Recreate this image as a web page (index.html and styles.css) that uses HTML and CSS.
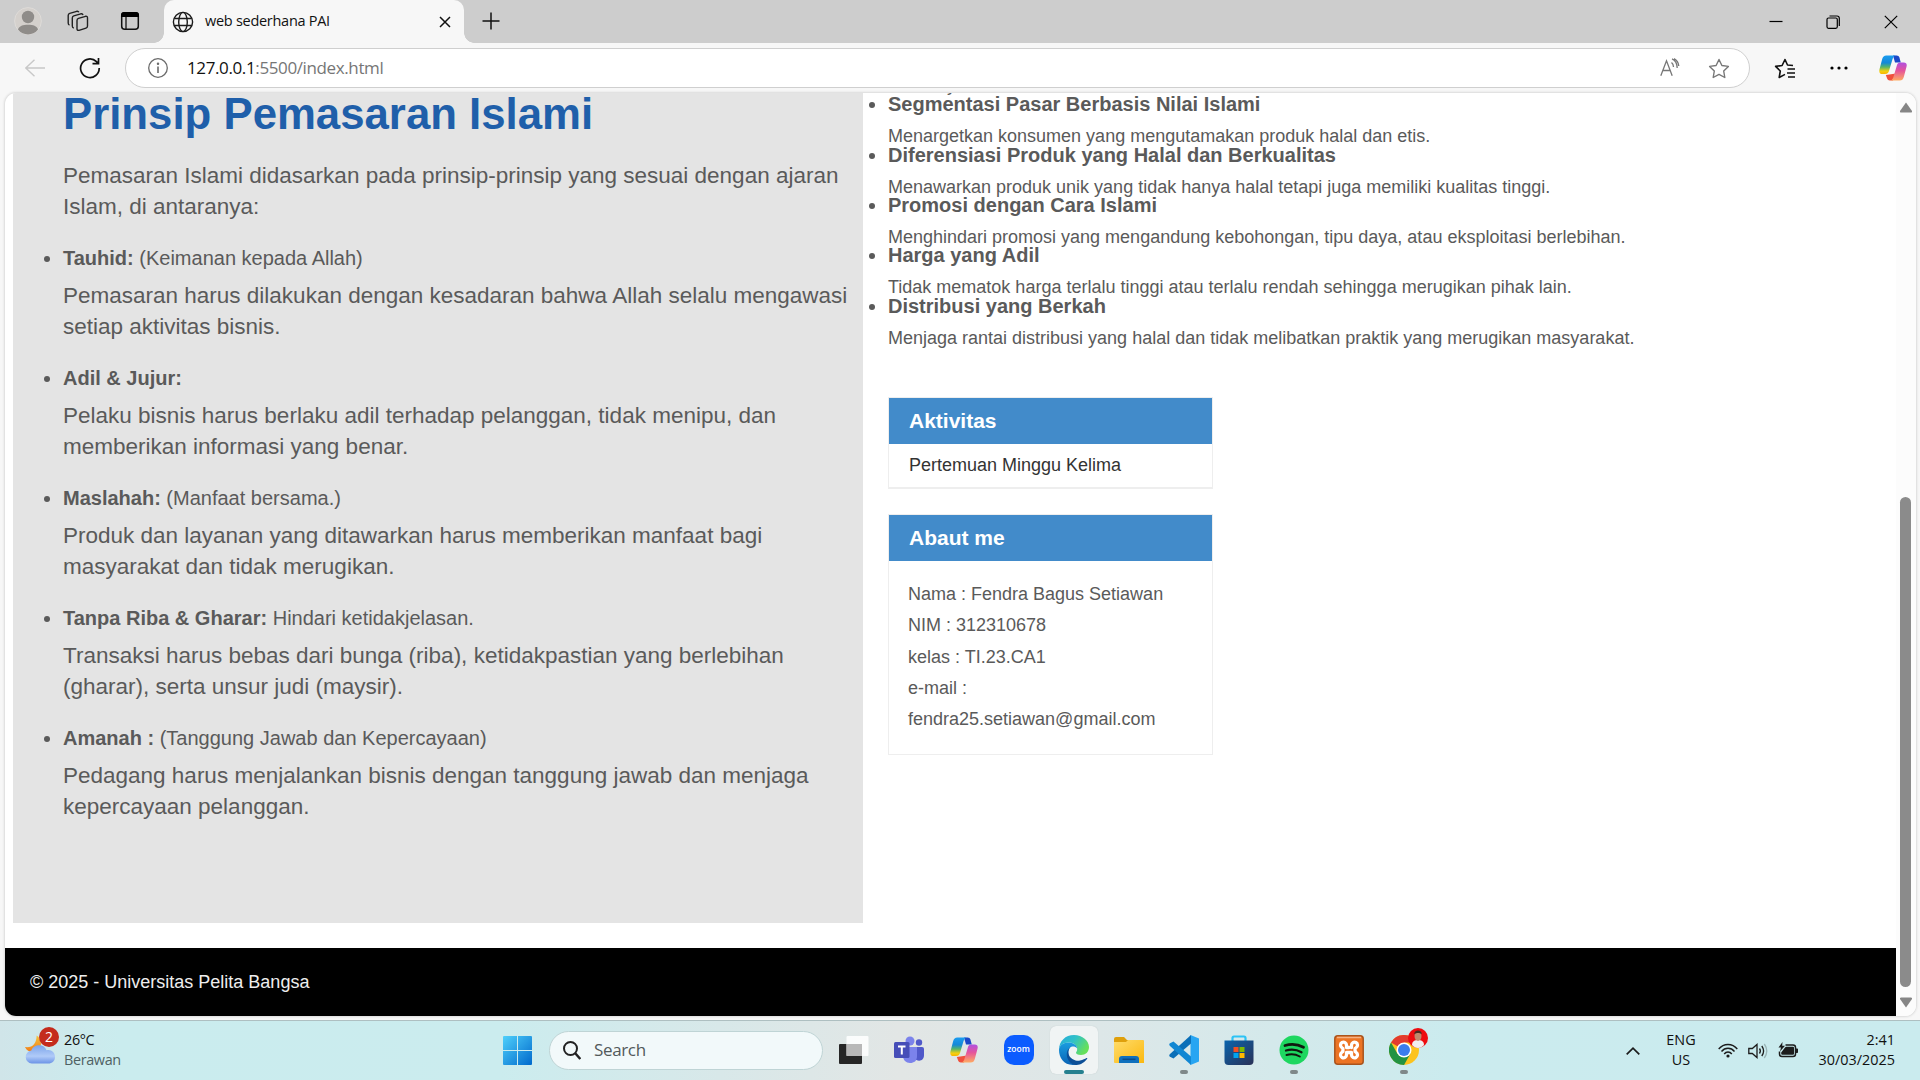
FILE: index.html
```html
<!DOCTYPE html>
<html lang="id">
<head>
<meta charset="utf-8">
<title>web sederhana PAI</title>
<link rel="stylesheet" href="styles.css">
</head>
<body>
<svg width="0" height="0" class="defs">
  <defs>
    <linearGradient id="cpA" x1="0" y1="0" x2="0" y2="1"><stop offset="0" stop-color="#1b9df0"/><stop offset=".4" stop-color="#1488d8"/><stop offset=".62" stop-color="#55b46a"/><stop offset=".85" stop-color="#f5d010"/><stop offset="1" stop-color="#f7b500"/></linearGradient>
    <linearGradient id="cpB" x1="0" y1="0" x2="0" y2="1"><stop offset="0" stop-color="#b04fe0"/><stop offset=".45" stop-color="#e5549b"/><stop offset="1" stop-color="#ffac62"/></linearGradient>
    <linearGradient id="win" x1="0" y1="0" x2="1" y2="1"><stop offset="0" stop-color="#4fd0fb"/><stop offset="1" stop-color="#0069cc"/></linearGradient>
    <linearGradient id="edA" x1="0" y1="0" x2="1" y2=".5"><stop offset="0" stop-color="#25a9dd"/><stop offset=".5" stop-color="#2fc1c8"/><stop offset="1" stop-color="#66e05a"/></linearGradient>
    <linearGradient id="edB" x1="0" y1="0" x2="0" y2="1"><stop offset="0" stop-color="#1a9de0"/><stop offset="1" stop-color="#0a63b5"/></linearGradient>
    <linearGradient id="fold" x1="0" y1="0" x2="1" y2="1"><stop offset="0" stop-color="#ffdc6b"/><stop offset="1" stop-color="#fbb80f"/></linearGradient>
    <linearGradient id="store" x1="0" y1="0" x2="1" y2="1"><stop offset="0" stop-color="#0a64ad"/><stop offset="1" stop-color="#2a3156"/></linearGradient>
    <linearGradient id="cloud" x1="0" y1="0" x2="0" y2="1"><stop offset="0" stop-color="#7ba3ea"/><stop offset=".6" stop-color="#b0cbf8"/><stop offset="1" stop-color="#6b93e6"/></linearGradient>
    <linearGradient id="moon" x1="0" y1="0" x2="0" y2="1"><stop offset="0" stop-color="#f6c43c"/><stop offset="1" stop-color="#f07d18"/></linearGradient>
    <symbol id="copilot" viewBox="0 0 28 26">
      <path d="M14 0.4h3.6c1.6 0 2.3.8 2.8 2.2l1.4 5H16z" fill="#1b48c8"/>
      <path d="M6.800 20l1.300 3.600c.5 1.300 1.300 2 2.700 2h3.200l3-7z" fill="#f0503c"/>
      <path d="M7.300.4h9.200c-1.800.6-2.500 2-3.100 4.100L10.300 15c-.7 2.600-1.500 4-4.300 4H3.300C.7 19-.2 17 .5 14.200L3.200 4C3.900 1.600 5 .4 7.300.4z" fill="url(#cpA)"/>
      <path d="M20.700 25.600H11.500c1.800-.6 2.500-2 3.100-4.100L17.700 11c.7-2.600 1.500-3.500 4.300-3.500h2.700c2.600 0 3.500 1.500 2.800 4.300L24.800 22c-.7 2.400-1.800 3.600-4.100 3.600z" fill="url(#cpB)"/>
    </symbol>
  </defs>
</svg>

<header class="tabbar">
  <div class="tab-tools">
    <svg class="avatar" viewBox="0 0 28 28"><circle cx="14" cy="14" r="13.400" fill="#d4d0cc" stroke="#dedbd8"/><circle cx="14" cy="10" r="6.200" fill="#8f8c89"/><path d="M4 22.500c1-3.700 5-4.800 10-4.800s9 1.100 10 4.800c-5 6.500-15 6.500-20 0z" fill="#8f8c89"/></svg>
    <svg class="workspaces" viewBox="0 0 22 22" fill="none" stroke="#222" stroke-width="1.400" stroke-linejoin="round"><path d="M11.500 8.300 18.500 6.300q2-.4 2 1.600v8q0 1.700-1.500 2.200l-7 2.200q-2 .5-2-1.500v-8.300q0-1.700 1.500-2.200zM6.800 18q-1.500-.3-1.500-2V8q0-1.700 1.500-2.200l7-2q1.800-.4 2.200 1.200M2.500 15q-1.300-.3-1.300-2V5.500q0-1.700 1.500-2.200l7-2q1.600-.4 2.100 1"/></svg>
    <svg class="tabs-icon" viewBox="0 0 20 20"><rect x="1.700" y="1.700" width="16.600" height="16.600" rx="3" fill="none" stroke="#111" stroke-width="1.500"/><path d="M1 6V4q0-3 3-3h12q3 0 3 3v2z"/><path d="M6 6v12" stroke="#111" stroke-width="1.300"/></svg>
  </div>
  <div class="tab">
    <svg class="globe" viewBox="0 0 22 22" fill="none" stroke="#1b1b1b" stroke-width="1.400"><circle cx="11" cy="11" r="9.600"/><ellipse cx="11" cy="11" rx="4.300" ry="9.600"/><path d="M2.200 7.500h17.600M2.200 14.500h17.600"/></svg>
    <span class="tab-title">web sederhana PAI</span>
    <svg class="tab-close" viewBox="0 0 12 12" stroke="#111" stroke-width="1.500"><path d="m1 1 10 10M11 1 1 11"/></svg>
  </div>
  <svg class="plus" viewBox="0 0 18 18" stroke="#111" stroke-width="1.500"><path d="M9 0.500v17M0.500 9h17"/></svg>
  <div class="window-buttons">
    <svg class="minimize" viewBox="0 0 14 14" stroke="#000" stroke-width="1.200"><path d="M.5 7.500h13"/></svg>
    <svg viewBox="0 0 14 14" fill="none" stroke="#000" stroke-width="1.200"><rect x="1" y="3" width="10.300" height="10.300" rx="1.500"/><path d="M3.500 1H11q2.300 0 2.300 2.300V11"/></svg>
    <svg viewBox="0 0 14 14" stroke="#000" stroke-width="1.200"><path d="m.8.8 12.400 12.400M13.200.8.8 13.200"/></svg>
  </div>
</header>

<nav class="toolbar">
  <svg class="back" viewBox="0 0 20 18" fill="none" stroke="#c8c8c8" stroke-width="1.400"><path d="M20 9H1M9.500.8.8 9l8.700 8.200"/></svg>
  <svg class="reload" viewBox="0 0 22 22" fill="none" stroke="#111" stroke-width="1.700"><path d="M20.200 11A9.300 9.300 0 1 1 17.500 4.700l1.600 1.800M19.500 1v5.700h-6"/></svg>
  <div class="address">
    <svg class="info" viewBox="0 0 22 22" fill="none" stroke="#6b6b6b" stroke-width="1.300"><circle cx="11" cy="11" r="9.300"/><path d="M11 9.500V16" stroke-width="1.600"/><circle cx="11" cy="6.700" r=".6" fill="#6b6b6b"/></svg>
    <span class="url"><b>127.0.0.1</b>:5500/index.html</span>
    <svg class="read" viewBox="0 0 20 19" fill="none" stroke="#777" stroke-width="1.300"><path d="m.8 17.800 5.700-15 5.700 15M3 12.500h7M11.500 4.500c1.300 1 2 2.500 2 4.500M12 .8c3 1.200 5 4.500 5.200 9.200M14 .6c3 1.600 4.500 4 4.800 7.400"/></svg>
    <svg class="star" viewBox="0 0 22 21" fill="none" stroke="#777" stroke-width="1.400" stroke-linejoin="round"><path d="m11 1.500 2.900 6 6.500.9-4.700 4.600 1.100 6.500-5.800-3.100-5.800 3.100L6.300 13 1.600 8.400l6.500-.9z"/></svg>
  </div>
  <svg class="favs" viewBox="0 0 22 21" fill="none" stroke="#111" stroke-width="1.600" stroke-linejoin="round"><path d="M19 7.500 13.500 7 11 1.500 8.100 7.500l-6.500.9L6.300 13l-1.100 6.500 5.800-3.100M13.500 11H21M13 15h8M14 19h7"/></svg>
  <svg class="more" viewBox="0 0 18 4"><circle cx="2" cy="2" r="1.600"/><circle cx="9" cy="2" r="1.600"/><circle cx="16" cy="2" r="1.600"/></svg>
  <svg class="side-copilot"><use href="#copilot"/></svg>
</nav>

<main class="viewport">
  <div class="page">
    <div class="columns">
      <section class="principles">
        <h1>Prinsip Pemasaran Islami</h1>
        <p>Pemasaran Islami didasarkan pada prinsip-prinsip yang sesuai dengan ajaran<br>Islam, di antaranya:</p>
        <ul>
          <li><b>Tauhid:</b> (Keimanan kepada Allah)<p>Pemasaran harus dilakukan dengan kesadaran bahwa Allah selalu mengawasi<br>setiap aktivitas bisnis.</p></li>
          <li><b>Adil &amp; Jujur:</b><p>Pelaku bisnis harus berlaku adil terhadap pelanggan, tidak menipu, dan<br>memberikan informasi yang benar.</p></li>
          <li><b>Maslahah:</b> (Manfaat bersama.)<p>Produk dan layanan yang ditawarkan harus memberikan manfaat bagi<br>masyarakat dan tidak merugikan.</p></li>
          <li><b>Tanpa Riba &amp; Gharar:</b> Hindari ketidakjelasan.<p>Transaksi harus bebas dari bunga (riba), ketidakpastian yang berlebihan<br>(gharar), serta unsur judi (maysir).</p></li>
          <li><b>Amanah :</b> (Tanggung Jawab dan Kepercayaan)<p>Pedagang harus menjalankan bisnis dengan tanggung jawab dan menjaga<br>kepercayaan pelanggan.</p></li>
        </ul>
      </section>
      <section class="side">
        <div class="strategy">
          <p class="scrolled">y</p>
          <ul>
            <li><b>Segmentasi Pasar Berbasis Nilai Islami</b><p>Menargetkan konsumen yang mengutamakan produk halal dan etis.</p></li>
            <li><b>Diferensiasi Produk yang Halal dan Berkualitas</b><p>Menawarkan produk unik yang tidak hanya halal tetapi juga memiliki kualitas tinggi.</p></li>
            <li><b>Promosi dengan Cara Islami</b><p>Menghindari promosi yang mengandung kebohongan, tipu daya, atau eksploitasi berlebihan.</p></li>
            <li><b>Harga yang Adil</b><p>Tidak mematok harga terlalu tinggi atau terlalu rendah sehingga merugikan pihak lain.</p></li>
            <li><b>Distribusi yang Berkah</b><p>Menjaga rantai distribusi yang halal dan tidak melibatkan praktik yang merugikan masyarakat.</p></li>
          </ul>
        </div>
        <div class="widget">
          <h3>Aktivitas</h3>
          <div class="widget-link">Pertemuan Minggu Kelima</div>
        </div>
        <div class="widget">
          <h3>Abaut me</h3>
          <p>Nama : Fendra Bagus Setiawan<br>NIM : 312310678<br>kelas : TI.23.CA1<br>e-mail :<br>fendra25.setiawan@gmail.com</p>
        </div>
      </section>
    </div>
    <footer>© 2025 - Universitas Pelita Bangsa</footer>
  </div>
  <div class="scrollbar">
    <svg viewBox="0 0 14 11"><path d="M7 .5 13 9q.5 1.500-1 1.500H2Q.5 10.500 1 9z" fill="#868686"/></svg>
    <div class="thumb"></div>
    <svg viewBox="0 0 14 11"><path d="M7 10.500 13 2q.5-1.500-1-1.500H2Q.5.5 1 2z" fill="#868686"/></svg>
  </div>
</main>

<div class="taskbar">
  <div class="weather">
    <div class="weather-icon">
      <svg viewBox="0 0 32 30"><path d="M12 0c5 3 7 12 0 16-4 2-10 1-12-4 8 1 12-4 12-12z" fill="url(#moon)"/><path d="M7 29a6.800 6.800 0 0 1-.5-13.500C8 11.500 11 10 14.500 10c4 0 6.500 2 7.800 5.200C27 14 31 17.500 31 22s-3 7-7 7z" fill="url(#cloud)"/></svg>
      <span class="badge">2</span>
    </div>
    <div class="weather-text"><span>26°C</span><span class="muted">Berawan</span></div>
  </div>
  <div class="apps">
    <svg class="start" viewBox="0 0 29 29" fill="url(#win)"><path d="M1 0h13v14H0V1q0-1 1-1zM15 0h13q1 0 1 1v13H15zM0 15h14v14H1q-1 0-1-1zM15 15h14v13q0 1-1 1H15z"/></svg>
    <div class="search">
      <svg viewBox="0 0 18 19" fill="none" stroke="#222" stroke-width="2"><circle cx="7.500" cy="7.500" r="6.500"/><path d="m12 12 5.300 6" stroke-width="2.500"/></svg>
      <span>Search</span>
    </div>
    <div class="app"><svg viewBox="0 0 30 30"><rect x="0" y="9" width="23" height="20" rx="1" fill="#262626"/><rect x="7.500" y="1" width="22" height="20" rx="1" fill="#fff" opacity=".85"/><rect x="7.500" y="9" width="15.500" height="12" fill="#b8b8b8"/></svg></div>
    <div class="app"><svg viewBox="0 0 30 30"><circle cx="16" cy="6" r="4.500" fill="#7b83eb"/><circle cx="25" cy="7.500" r="3.200" fill="#5059c9"/><path d="M20 12h8q2 0 2 2v6c0 7-7 7-10 3z" fill="#5059c9"/><path d="M9 12h14v9c0 5-3 7-7 7s-7-3-7-7z" fill="#7b83eb"/><rect x="0" y="7" width="15.500" height="16" rx="1.500" fill="#464eb8"/><path d="M4 11.500h7.500M7.800 11.500v8" stroke="#fff" stroke-width="2"/></svg></div>
    <div class="app"><svg class="cp"><use href="#copilot"/></svg></div>
    <div class="app"><div class="zoom">zoom</div></div>
    <div class="app active"><svg viewBox="0 0 30 30"><path d="M0 15C0 6 6.500 0 15 0s15 6 15 12c0 5-3.500 8-8 8-3.500 0-5-1.200-5-2.300 0-.8 1.200-1.200 1.200-3.700C18.200 10 14 7.500 10 7.500 4 7.500 0 11 0 15z" fill="url(#edA)"/><path d="M0 15c0-4.500 4-7.500 10-7.500 4 0 8 2.500 8.200 6-1-1.500-2.700-2-4.200-2-4 0-6 5-4 10 1.500 4 5 8 8 8-12 2.500-18-6-18-14.500z" fill="url(#edB)"/><path d="M11 12.500C6 20 14 27 21 25.500c3-.6 5-1.600 6.500-2.500 .6-.3 1 .2.700.7C24 29.500 19 30 16 29.900 8 28 5 17 11 12.500z" fill="#0c4f97"/></svg><i class="mark wide"></i></div>
    <div class="app"><svg viewBox="0 0 30 30"><path d="M0 4q0-2 2-2h8l3 3h15q2 0 2 2v5H0z" fill="#dfa00c"/><path d="M0 7h12l2-2h14.500q1.500 0 1.500 1.500V28H1q-1 0-1-1z" fill="url(#fold)"/><path d="M5 28v-4q0-3 3-3h14q3 0 3 3v4z" fill="#0f70bd"/><path d="M8.500 24.300h13" stroke="#084b8a" stroke-width="1.500"/></svg></div>
    <div class="app"><svg viewBox="0 0 30 30"><path d="M21.500 0 30 3.500v23L21.500 30z" fill="#27a5f2"/><path d="M22 0v8.500L4.500 23.500 1 21.800Q-.5 20.600 1 19z" fill="#0a6fb8"/><path d="M22 30v-8.500L4.500 6.500 1 8.200Q-.5 9.400 1 11z" fill="#1287d3"/></svg><i class="mark"></i></div>
    <div class="app"><svg viewBox="0 0 30 30"><path d="M8.500 7V3q0-1.500 1.500-1.500h10q1.500 0 1.500 1.500v4" fill="none" stroke="#2cc3f5" stroke-width="2.200"/><path d="M.5 5.500h29V26q0 4-4 4h-21q-4 0-4-4z" fill="url(#store)"/><path d="M9.500 12h5v5h-5z" fill="#f25022"/><path d="M15.500 12h5v5h-5z" fill="#7fba00"/><path d="M9.500 18h5v5h-5z" fill="#00a4ef"/><path d="M15.500 18h5v5h-5z" fill="#ffb900"/></svg></div>
    <div class="app"><svg viewBox="0 0 30 30"><circle cx="15" cy="15" r="14.500" fill="#1ed760"/><g fill="none" stroke="#10190f" stroke-linecap="round"><path d="M6 10.500c6-1.800 13-1.200 18.500 1.800" stroke-width="2.800"/><path d="M7 15.500c5-1.500 11-.8 15.500 1.700" stroke-width="2.300"/><path d="M7.500 20c4.500-1.300 9.500-.7 13.300 1.500" stroke-width="2"/></g></svg><i class="mark"></i></div>
    <div class="app"><svg viewBox="0 0 30 30"><rect x=".8" y=".8" width="28.400" height="28.400" rx="3" fill="#ec7424" stroke="#a9541d" stroke-width="1.500"/><path d="M3 2.500h24" stroke="#f5b183" stroke-width="1.500"/><path d="M15 12.500h-2.500v-2.300a3 3 0 1 0-4.600 2.500l1 .8v3l-1 .8a3 3 0 1 0 4.600 2.500v-2.300H17.500v2.300a3 3 0 1 0 4.600-2.500l-1-.8v-3l1-.8a3 3 0 1 0-4.600-2.500v2.300" fill="none" stroke="#fff" stroke-width="3.300" stroke-linejoin="round" stroke-linecap="round"/></svg></div>
    <div class="app"><svg viewBox="0 0 30 30"><circle cx="15" cy="15" r="15" fill="#fcc31e"/><path d="M15 15 2 7.500A15 15 0 0 1 28 7.500H15z" fill="#e33b2e"/><path d="M2 7.500A15 15 0 0 0 15 30l6.500-11.500L15 15 8.500 18.700z" fill="#229342"/><circle cx="15" cy="15" r="7.500" fill="#fff"/><circle cx="15" cy="15" r="6" fill="#3b7ded"/></svg>
      <svg class="profile" viewBox="0 0 20 20"><circle cx="10" cy="10" r="10" fill="#ee0c10"/><path d="M4 17c0-4 3-5 6-5s6 1 6 5c-3 4-9 4-12 0z" fill="#f1eeee"/><ellipse cx="10" cy="8" rx="3.500" ry="5" fill="#c08a6d"/><path d="M6.200 6.500c-.5-5.500 8.100-5.500 7.600 0-1.500-2-6-2-7.600 0z" fill="#4a2c20"/></svg><i class="mark"></i></div>
  </div>
  <div class="tray">
    <svg class="chev" viewBox="0 0 14 8" fill="none" stroke="#1c1c1c" stroke-width="1.700"><path d="M.7 7.300 7 1.200l6.300 6.100"/></svg>
    <div class="lang"><span>ENG</span><span>US</span></div>
    <svg class="wifi" viewBox="0 0 20 15" fill="none" stroke="#1c1c1c" stroke-width="1.400"><path d="M.7 6c5-6 13.600-6 18.600 0M3.500 8.500c3.500-4.300 9.500-4.300 13 0M6.200 11c2-2.600 5.600-2.600 7.600 0"/><circle cx="10" cy="13" r="1.600" fill="#1c1c1c" stroke="none"/></svg>
    <svg class="sound" viewBox="0 0 20 16" fill="none" stroke="#1c1c1c" stroke-width="1.300"><path d="M.8 5.500v5h3.500L9 14.500v-13L4.300 5.500zM11.500 5.500q1.800 2.500 0 5M13.800 3q3.600 5 0 10"/><path d="M16.300 1q5 7 0 14" stroke="#9bb5b7"/></svg>
    <svg class="battery" viewBox="0 0 20 16"><path d="M7.500 3H15q2.500 0 2.500 2.500v6.500q0 2.500-2.500 2.500H4q-2.500 0-2.500-2.500V9.500" fill="none" stroke="#1c1c1c" stroke-width="1.500"/><path d="M8 4.800h7q1 0 1 1v6q0 1-1 1H4.200q-1 0-1-1v-1.300L7 5.500zM18 6.500h1.200q.8 0 .8.800v3q0 .7-.8.700H18zM4.500 0 .5 5.500H3L2 9.500l5-5.700H4.200z" fill="#1c1c1c"/></svg>
    <div class="clock"><span>2:41</span><span>30/03/2025</span></div>
  </div>
</div>
</body>
</html>
```

FILE: styles.css
```css
* { box-sizing: border-box; }
body {
  margin: 0; width: 1920px; height: 1080px; overflow: hidden;
  display: grid; grid-template-rows: 43px 50px 927px 60px;
  background: #f7f7f7; font-family: "Open Sans", "Noto Sans", sans-serif; color: #111;
}
svg { display: block; flex: none; }
.defs { position: absolute; }

/* tab strip */
.tabbar { display: flex; align-items: center; background: #cdcdcd; }
.tab-tools { width: 164px; display: flex; align-items: center; padding-left: 14px; padding-bottom: 1px; }
.avatar { width: 28px; height: 28px; }
.workspaces { width: 22px; height: 22px; margin-left: 25px; }
.tabs-icon { width: 20px; height: 20px; margin-left: 31px; }
.tab {
  position: relative; width: 300px; height: 43px; padding: 0 13px 0 8px;
  display: flex; align-items: center; background: #f7f7f7; border-radius: 10px 10px 0 0;
}
.tab::before, .tab::after { content: ""; position: absolute; bottom: 0; width: 10px; height: 10px; }
.tab::before { left: -10px; background: radial-gradient(circle at 0 0, transparent 9.5px, #f7f7f7 10px); }
.tab::after { right: -10px; background: radial-gradient(circle at 100% 0, transparent 9.5px, #f7f7f7 10px); }
.globe { width: 22px; height: 22px; }
.tab-title { margin-left: 11px; padding-bottom: 2px; font-size: 14.5px; letter-spacing: -.28px; white-space: nowrap; }
.tab-close { width: 12px; height: 12px; margin-left: auto; }
.plus { width: 18px; height: 18px; margin: 0 0 2px 18px; }
.window-buttons { margin-left: auto; padding-right: 22px; display: flex; gap: 44px; }
.window-buttons svg { width: 14px; height: 14px; }
.window-buttons .minimize { margin: -1px -1px 1px 1px; }

/* toolbar */
.toolbar { display: flex; align-items: center; background: #f7f7f7; }
.back { width: 20px; height: 18px; margin: 0 0 1px 25px; }
.reload { width: 22px; height: 22px; margin: 0 0 1px 34px; }
.address {
  width: 1625px; height: 40px; margin-left: 24px; padding: 0 19px 0 21px;
  display: flex; align-items: center; border: 1px solid #cfcfcf; border-radius: 20px; background: #fff;
}
.info { width: 22px; height: 22px; }
.url { margin-left: 18px; padding-bottom: 2px; font-size: 17px; letter-spacing: -.38px; color: #767676; white-space: nowrap; }
.url b { font-weight: 400; color: #111; }
.read { width: 20px; height: 19px; margin: 0 0 1px auto; }
.star { width: 22px; height: 21px; margin-left: 28px; }
.favs { width: 22px; height: 21px; margin-left: 24px; }
.more { width: 18px; height: 4px; margin-left: 34px; }
.side-copilot { width: 28px; height: 26px; margin-left: 31px; }

/* page viewport */
.viewport {
  width: 1911px; height: 923px; margin-left: 5px; display: flex; overflow: hidden;
  background: #fff; border-radius: 11px; box-shadow: 0 0 3px #bbb;
  font-family: "Liberation Sans", Arial, sans-serif; color: #5a5a5a;
}
.page { width: 1891px; display: flex; flex-direction: column; }
.columns { height: 855px; display: flex; padding: 0 0 25px 8px; }
.page p { margin: 0; }
.page ul { margin: 0; padding: 0; }
.principles { width: 850px; padding-left: 50px; background: #e4e4e4; white-space: nowrap; }
.principles h1 { margin: 0 0 25.4px; font-size: 43.75px; line-height: 42px; color: #1f5faa; }
.principles p { font-size: 22.5px; line-height: 31px; }
.principles ul { padding-top: 20.6px; font-size: 20px; line-height: 31px; }
.principles li { margin-bottom: 20.6px; }
.principles li p { margin-top: 6.4px; }
.side { flex: 1; padding-left: 25px; font-size: 18px; white-space: nowrap; }
.strategy { margin-top: -19.8px; margin-bottom: 52.9px; }
.strategy li { font-size: 20px; line-height: 25px; }
.strategy p { font-size: 18px; line-height: 25.4px; margin: 7px 0 -7px; }
.strategy .scrolled { margin: 0 0 -6.5px 59px; }
.widget { width: 325px; margin-bottom: 25px; border: 1px solid #eee; }
.widget h3 { margin: 0; padding-left: 20px; font-size: 21px; line-height: 46px; color: #fff; background: #428bca; }
.widget-link { height: 44px; padding: 0 20px; line-height: 43px; color: #333; border-bottom: 1px solid #eee; }
.widget p { height: 193px; padding: 18px 19px 0; line-height: 31.25px; }
footer { height: 68px; padding-left: 25px; line-height: 68px; font-size: 18px; color: #eee; background: #000; }
.scrollbar { width: 20px; display: flex; flex-direction: column; align-items: center; padding: 9px 1px 8px 0; background: #fcfcfc; }
.scrollbar svg { width: 14px; height: 11px; }
.thumb { width: 11px; height: 490px; margin: auto 0 10px; border-radius: 6px; background: #8b8b8b; }

/* taskbar */
.taskbar {
  display: grid; grid-template-columns: 503px 1fr auto; align-items: center; border-top: 1px solid #aebfc1;
  background: linear-gradient(90deg, #d0e5e9 0, #caecee 120px, #cbecee 500px, #d8e8e9 720px, #e2e6e5 900px, #dde7e8 1100px, #cbebee 1450px, #caebee 100%);
  font-size: 14.4px; line-height: 20px;
}
.weather { display: flex; align-items: center; padding-left: 25px; gap: 9px; }
.weather-icon { position: relative; width: 30px; height: 30px; margin-top: -2px; }
.weather-icon svg { width: 31px; height: 30px; }
.badge { position: absolute; left: 14px; top: -8px; width: 20px; height: 20px; border-radius: 50%; background: #c42b1c; color: #fff; text-align: center; font-size: 14px; }
.weather-text, .lang, .clock { display: flex; flex-direction: column; white-space: nowrap; padding-bottom: 2px; }
.weather-text { letter-spacing: -.35px; }
.muted { color: #4f6163; }
.apps { display: flex; align-items: center; padding-bottom: 1px; }
.start { width: 29px; height: 29px; }
.search {
  width: 274px; height: 39px; margin: 0 3px 0 17px; padding: 0 13px; display: flex; align-items: center; gap: 13px;
  border: 1px solid #bfd4d5; border-radius: 20px; background: #f2f9fa; font-size: 17px; color: #525a5b; letter-spacing: -.35px;
}
.search svg { width: 18px; height: 19px; }
.app { position: relative; width: 55px; height: 48px; display: flex; align-items: center; justify-content: center; }
.app svg { width: 30px; height: 30px; }
.app .cp { width: 28px; height: 26px; }
.active::before { content: ""; position: absolute; inset: 0 3px 0 4px; border-radius: 6px; background: #f0f4f4; box-shadow: 0 0 1px #b5c0c0; }
.active svg { position: relative; }
.mark { position: absolute; left: 24px; bottom: 0; width: 8px; height: 4px; border-radius: 2px; background: #7f8889; }
.mark.wide { left: 18px; width: 20px; background: #25808f; }
.zoom { width: 30px; height: 30px; border-radius: 10px; background: #0b5cff; color: #fff; font: 600 8.500px/27px "Open Sans", sans-serif; text-align: center; }
.app .profile { position: absolute; right: 3px; top: 2px; width: 20px; height: 20px; }
.tray { display: flex; align-items: center; padding-right: 25px; }
.chev { width: 14px; height: 8px; }
.lang { width: 30px; margin-left: 26px; align-items: center; }
.wifi { width: 20px; height: 15px; margin-left: 22px; }
.sound { width: 20px; height: 16px; margin-left: 10px; }
.battery { width: 20px; height: 16px; margin: 0 0 2px 10px; }
.clock { width: 77px; margin-left: 20px; align-items: flex-end; }
```
